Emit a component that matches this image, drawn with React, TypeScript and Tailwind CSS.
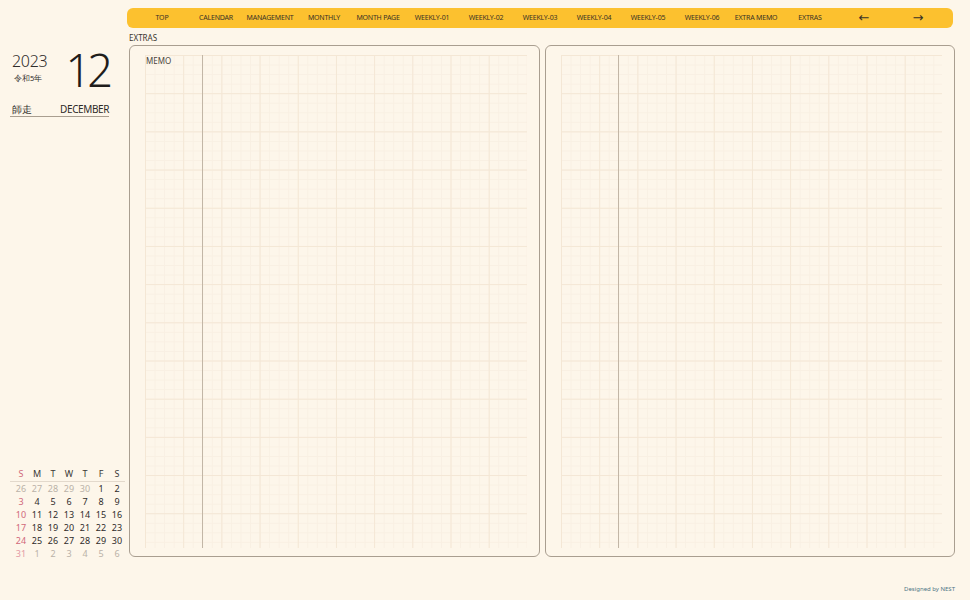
import React, { FC } from 'react';

const navItems = [
    'TOP', 'CALENDAR', 'MANAGEMENT', 'MONTHLY', 'MONTH PAGE',
    'WEEKLY-01', 'WEEKLY-02', 'WEEKLY-03', 'WEEKLY-04', 'WEEKLY-05', 'WEEKLY-06',
    'EXTRA MEMO', 'EXTRAS', '←', '→',
];

type Day = { d: number; muted?: boolean };

const weeks: Day[][] = [
    [{ d: 26, muted: true }, { d: 27, muted: true }, { d: 28, muted: true }, { d: 29, muted: true }, { d: 30, muted: true }, { d: 1 }, { d: 2 }],
    [{ d: 3 }, { d: 4 }, { d: 5 }, { d: 6 }, { d: 7 }, { d: 8 }, { d: 9 }],
    [{ d: 10 }, { d: 11 }, { d: 12 }, { d: 13 }, { d: 14 }, { d: 15 }, { d: 16 }],
    [{ d: 17 }, { d: 18 }, { d: 19 }, { d: 20 }, { d: 21 }, { d: 22 }, { d: 23 }],
    [{ d: 24 }, { d: 25 }, { d: 26 }, { d: 27 }, { d: 28 }, { d: 29 }, { d: 30 }],
    [{ d: 31 }, { d: 1, muted: true }, { d: 2, muted: true }, { d: 3, muted: true }, { d: 4, muted: true }, { d: 5, muted: true }, { d: 6, muted: true }],
];

const MiniCalendar: FC = () => (
    <div className="pl-[13px] pr-[5px] text-[9px] leading-[13px]">
        <div className="-ml-[3px] grid w-[115px] grid-cols-[repeat(7,16px)] border-b border-[#e3d9cc] pb-px pl-[3px]">
            {['S', 'M', 'T', 'W', 'T', 'F', 'S'].map((h, i) => (
                <div key={i} className={`text-center ${i === 0 ? 'text-[#d0687a]' : 'text-[#3b3835]'}`}>{h}</div>
            ))}
        </div>
        {weeks.map((w, r) => (
            <div key={r} className="grid grid-cols-[repeat(7,16px)]">
                {w.map((day, i) => {
                    let color = 'text-[#2f2c2a]';
                    if (day.muted) color = 'text-[#bab2a8]';
                    else if (i === 0) color = 'text-[#d0687a]';
                    if (r === 5 && i === 0) color = 'text-[#e39aa5]';
                    return <div key={i} className={`text-center ${color}`}>{day.d}</div>;
                })}
            </div>
        ))}
    </div>
);

const gridBg =
    'bg-[linear-gradient(to_right,#f4e7d5_1px,transparent_1px),linear-gradient(to_bottom,#f4e7d5_1px,transparent_1px),linear-gradient(to_right,#f9f0e3_1px,transparent_1px),linear-gradient(to_bottom,#f9f0e3_1px,transparent_1px)] bg-[size:38.2px_38.2px,38.2px_38.2px,9.55px_9.55px,9.55px_9.55px]';

const Page: FC<{ label?: string }> = ({ label }) => (
    <div className="relative h-[512px] w-[411px] rounded-[6px] border-[1.5px] border-[#a99e90] pl-[15px] pr-[12px] pt-[9px] pb-[8px]">
        <div className={`relative h-full w-full ${gridBg}`}>
            <div className="absolute left-[57px] top-0 h-full w-px bg-[#c2b6a6]" />
        </div>
        {label && <div className="absolute left-[16px] top-[9px] text-[8px] text-[#4a4540]">{label}</div>}
    </div>
);

const App: FC = () => {
    return (
        <div className="flex h-[600px] w-[970px] overflow-hidden bg-[#fdf6ea] font-['Noto_Sans','DejaVu_Sans',sans-serif] text-[#2e2b28]">
            <div className="flex w-[127px] flex-col justify-between pt-[51px] pb-[40px]">
                <div className="pl-[10px] pr-[18px]">
                    <div className="flex items-start">
                        <div className="pl-[2px]">
                            <div className="text-[16px] font-light leading-[20px] tracking-[-0.3px] text-[#2f2c2a]">2023</div>
                            <div className="pl-[2px] text-[7.5px] leading-[14px]">令和5年</div>
                        </div>
                        <div className="ml-auto -mt-[3px] text-[45px] font-light leading-[44px] tracking-[-4px] text-[#1f1d1b]">12</div>
                    </div>
                    <div className="mt-[11px] flex items-end justify-between border-b-[1.5px] border-[#a99e90] pl-[2px] pb-[1px] leading-[12px]">
                        <span className="text-[10px]">師走</span>
                        <span className="text-[10px] tracking-[-0.4px]">DECEMBER</span>
                    </div>
                </div>
                <MiniCalendar />
            </div>

            <div className="flex w-[828px] flex-col pt-[8px]">
                <div className="flex h-[20px] w-[826px] items-center rounded-[6px] bg-[#fcc12f] px-[8px]">
                    {navItems.map((item) => (
                        <div key={item} className={`w-[54px] text-center ${item.length === 1 ? 'text-[13px]' : 'text-[7px] tracking-[-0.2px]'} text-[#3a3226]`}>
                            {item}
                        </div>
                    ))}
                </div>
                <div className="ml-[2px] mt-[2px] h-[15px] text-[8px] leading-[15px] text-[#3a3530]">EXTRAS</div>
                <div className="ml-[2px] flex gap-[5px]">
                    <Page label="MEMO" />
                    <Page />
                </div>
                <div className="mt-[28px] flex justify-end text-[6px] text-[#4d7585]">Designed by NEST</div>
            </div>
        </div>
    );
};

export default App;
